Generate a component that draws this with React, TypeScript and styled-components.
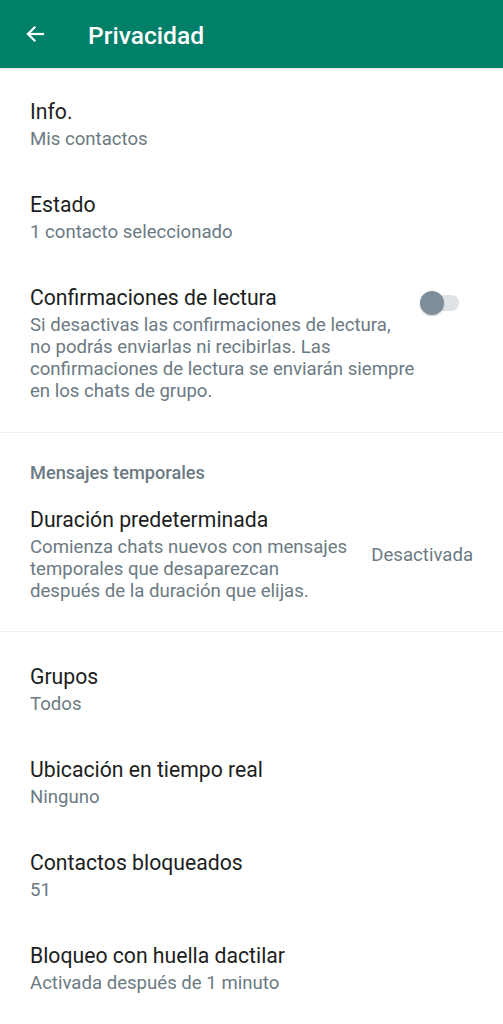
import styled, {createGlobalStyle} from 'styled-components';

const GlobalStyle = createGlobalStyle`
  html, body {
    margin: 0;
    padding: 0;
    background: #ffffff;
    font-family: Roboto, "Noto Sans", "Liberation Sans", sans-serif;
  }
`

type Item = {title: string; subtitle: string};

const mainItems: Item[] = [
  {title: 'Info.', subtitle: 'Mis contactos'},
  {title: 'Estado', subtitle: '1 contacto seleccionado'},
];

const lowerItems: Item[] = [
  {title: 'Grupos', subtitle: 'Todos'},
  {title: 'Ubicación en tiempo real', subtitle: 'Ninguno'},
  {title: 'Contactos bloqueados', subtitle: '51'},
  {title: 'Bloqueo con huella dactilar', subtitle: 'Activada después de 1 minuto'},
];

function BackArrow() {
  return (
    <svg width="24" height="24" viewBox="0 0 24 24" fill="none" stroke="#ffffff" strokeWidth="2.2" strokeLinecap="square">
      <path d="M20 12H5" />
      <path d="M11.5 5.5L5 12l6.5 6.5" />
    </svg>
  )
}

function App() {
  return (
    <Page>
      <GlobalStyle />
      <Header>
        <BackButton aria-label="Atrás"><BackArrow /></BackButton>
        <HeaderTitle>Privacidad</HeaderTitle>
      </Header>

      <Section $top={10} $bottom={9}>
        {mainItems.map(item => (
          <Row key={item.title}>
            <Body>
              <Title>{item.title}</Title>
              <Subtitle>{item.subtitle}</Subtitle>
            </Body>
          </Row>
        ))}
        <Row>
          <Body>
            <Title>Confirmaciones de lectura</Title>
            <Subtitle>
              Si desactivas las confirmaciones de lectura,<br />
              no podrás enviarlas ni recibirlas. Las<br />
              confirmaciones de lectura se enviarán siempre<br />
              en los chats de grupo.
            </Subtitle>
          </Body>
          <Switch role="switch" aria-checked="false">
            <Thumb />
          </Switch>
        </Row>
      </Section>

      <Section $top={29} $bottom={8}>
        <SectionLabel>Mensajes temporales</SectionLabel>
        <Row $centered>
          <Body>
            <Title>Duración predeterminada</Title>
            <Subtitle>
              Comienza chats nuevos con mensajes<br />
              temporales que desaparezcan<br />
              después de la duración que elijas.
            </Subtitle>
          </Body>
          <Value>Desactivada</Value>
        </Row>
      </Section>

      <Section $top={11} $bottom={0} $last>
        {lowerItems.map(item => (
          <Row key={item.title}>
            <Body>
              <Title>{item.title}</Title>
              <Subtitle>{item.subtitle}</Subtitle>
            </Body>
          </Row>
        ))}
      </Section>
    </Page>
  )
}

const Page = styled.div`
  width: 503px;
  min-height: 1024px;
  background: #ffffff;
  overflow: hidden;
`

const Header = styled.header`
  height: 68px;
  background: #008069;
  display: flex;
  align-items: center;
  padding: 2px 0 0 23px;
  box-sizing: border-box;
  box-shadow: 0 1px 3px rgba(0, 0, 0, 0.12);
  position: relative;
  z-index: 1;
`

const BackButton = styled.button`
  display: flex;
  align-items: center;
  justify-content: center;
  width: 24px;
  height: 24px;
  padding: 0;
  margin: -2px 41px 0 0;
  border: none;
  background: transparent;
`

const HeaderTitle = styled.h1`
  margin: 0;
  color: #ffffff;
  font-size: 24.6px;
  font-weight: 500;
`

const Section = styled.section<{$top: number; $bottom: number; $last?: boolean}>`
  padding: ${p => p.$top}px 0 ${p => p.$bottom}px;
  border-bottom: ${p => (p.$last ? 'none' : '1px solid #eceff1')};
`

const SectionLabel = styled.div`
  padding: 0 30px 2px;
  font-size: 18.2px;
  line-height: 22px;
  font-weight: 500;
  color: #6b7a83;
`

const Row = styled.div<{$centered?: boolean}>`
  display: flex;
  align-items: ${p => (p.$centered ? 'center' : 'flex-start')};
  padding: 21px 30px;
`

const Body = styled.div`
  flex: 1;
  min-width: 0;
  white-space: nowrap;
`

const Title = styled.div`
  font-size: 21.2px;
  line-height: 26px;
  color: #1c1e21;
`

const Subtitle = styled.div`
  margin-top: 3px;
  font-size: 18.6px;
  line-height: 22px;
  color: #6b7a83;
`

const Value = styled.div`
  margin-left: 16px;
  font-size: 18.6px;
  line-height: 22px;
  color: #6b7a83;
  white-space: nowrap;
`

const Switch = styled.div`
  position: relative;
  flex: none;
  width: 38px;
  height: 16px;
  margin: 10px 14px 0 0;
  border-radius: 8px;
  background: #dfe3e6;
`

const Thumb = styled.div`
  position: absolute;
  left: -1px;
  top: -4px;
  width: 24px;
  height: 24px;
  border-radius: 50%;
  background: #7d8d99;
  box-shadow: 0 1px 2px rgba(0, 0, 0, 0.2);
`

export default App;
